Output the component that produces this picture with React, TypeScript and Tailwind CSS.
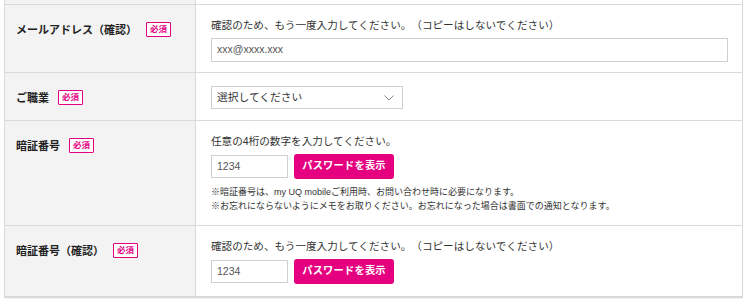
/**
 * MemberForm — confirmation part of a registration table.
 * Two-column grid: gray label cell on the left, inputs on the right.
 */

const FONT = 'font-["Liberation_Sans","Noto_Sans_CJK_JP",sans-serif] [text-spacing-trim:space-all]'

function Required() {
  return (
    <span className="inline-flex items-center justify-center h-[15px] px-[3px] border border-[#e4007f] bg-white text-[#e4007f] text-[8.5px] font-bold leading-none rounded-[1px]">
      必須
    </span>
  )
}

function Label({ text }: { text: string }) {
  return (
    <div className="bg-[#f3f3f3] border-r border-[#d9d9d9] pl-[11px] pt-[17px]">
      <div className="flex items-center gap-[9px] h-[15px]">
        <span className="text-[11px] font-bold text-[#222] leading-[14px] whitespace-nowrap">{text}</span>
        <Required />
      </div>
    </div>
  )
}

function Hint({ text }: { text: string }) {
  return <p className="text-[10.6px] leading-[14px] text-[#333] whitespace-nowrap">{text}</p>
}

function PinInput() {
  return (
    <div className="flex items-center gap-[6px] mt-[6px] h-[25px]">
      <div className="w-[77px] h-[23px] border border-[#cfcfcf] bg-white flex items-center pl-[5px] text-[10.5px] text-[#555]">
        1234
      </div>
      <button className="w-[100px] h-[25px] rounded-[3px] bg-[#e4007f] text-white text-[10.25px] font-bold leading-none tracking-[0.2px]">
        パスワードを表示
      </button>
    </div>
  )
}

export default function App() {
  return (
    <div className={`w-[750px] h-[301px] bg-white ${FONT}`}>
      <div className="ml-[4px] w-[739px] border-x border-b-2 border-[#d9d9d9] shadow-[0_1px_1px_rgba(0,0,0,0.04)]">
        {/* tail of the previous row */}
        <div className="grid grid-cols-[191px_1fr] h-[4px]">
          <div className="bg-[#f3f3f3] border-r border-[#d9d9d9]" />
          <div />
        </div>

        {/* メールアドレス（確認） */}
        <div className="grid grid-cols-[191px_1fr] border-t border-[#d9d9d9]">
          <Label text="メールアドレス（確認）" />
          <div className="pl-[15px] pr-[14px] pt-[13px] pb-[10px]">
            <Hint text="確認のため、もう一度入力してください。（コピーはしないでください）" />
            <div className="mt-[6px] h-[24px] border border-[#cfcfcf] flex items-center pl-[5px] text-[10.5px] text-[#555]">
              xxx@xxxx.xxx
            </div>
          </div>
        </div>

        {/* ご職業 */}
        <div className="grid grid-cols-[191px_1fr] border-t border-[#d9d9d9]">
          <Label text="ご職業" />
          <div className="pl-[15px] pt-[13px] pb-[11px]">
            <div className="w-[192px] h-[23px] border border-[#cfcfcf] flex items-center justify-between pl-[5px] pr-[8px] text-[10.75px] text-[#333]">
              <span>選択してください</span>
              <svg width="10" height="6" viewBox="0 0 10 6" fill="none">
                <path d="M0.5 0.5 L5 5 L9.5 0.5" stroke="#777" strokeWidth="0.9" />
              </svg>
            </div>
          </div>
        </div>

        {/* 暗証番号 */}
        <div className="grid grid-cols-[191px_1fr] border-t border-[#d9d9d9]">
          <Label text="暗証番号" />
          <div className="pl-[15px] pt-[13px] pb-[12px]">
            <Hint text="任意の4桁の数字を入力してください。" />
            <PinInput />
            <div className="mt-[6px] text-[9px] leading-[14px] text-[#333] whitespace-nowrap">
              <p>※暗証番号は、my UQ mobileご利用時、お問い合わせ時に必要になります。</p>
              <p>※お忘れにならないようにメモをお取りください。お忘れになった場合は書面での通知となります。</p>
            </div>
          </div>
        </div>

        {/* 暗証番号（確認） */}
        <div className="grid grid-cols-[191px_1fr] border-t border-[#d9d9d9]">
          <Label text="暗証番号（確認）" />
          <div className="pl-[15px] pt-[13px] pb-[12px]">
            <Hint text="確認のため、もう一度入力してください。（コピーはしないでください）" />
            <PinInput />
          </div>
        </div>
      </div>
    </div>
  )
}
